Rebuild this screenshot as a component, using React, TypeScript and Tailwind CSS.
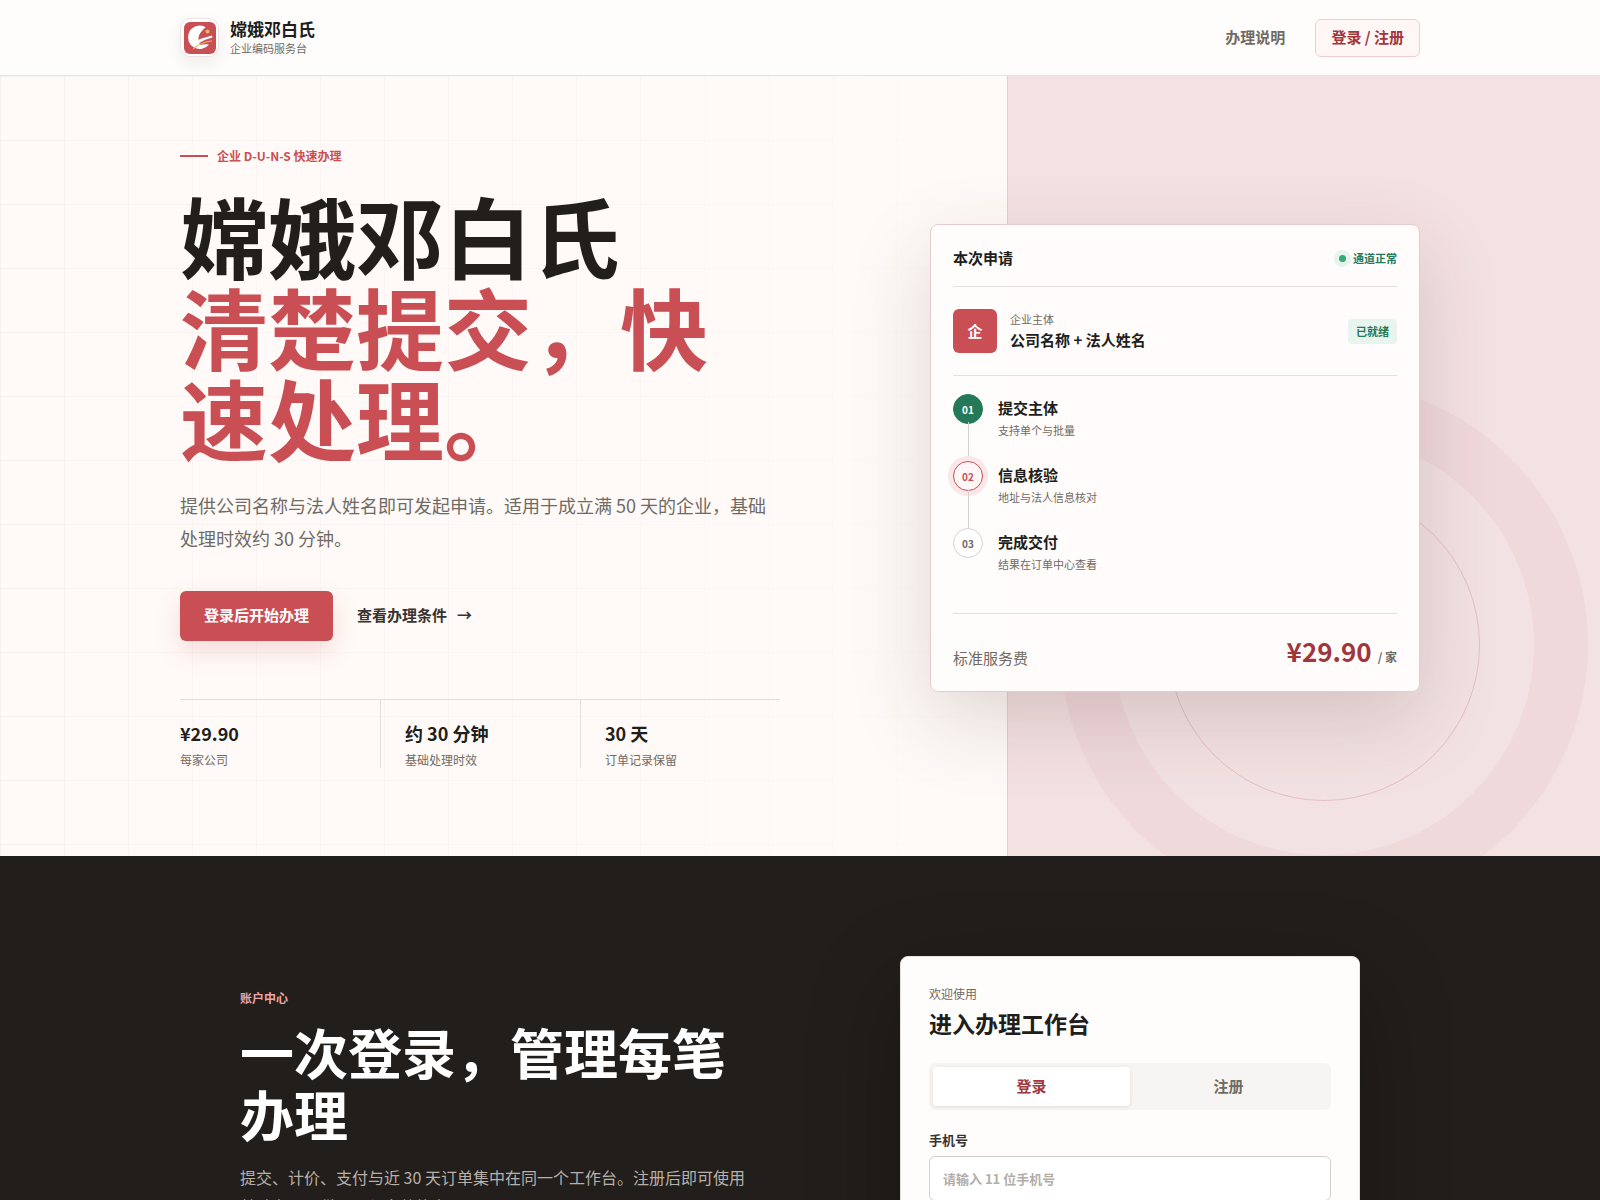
import React, { useState } from 'react';

const stats = [
  { value: '¥29.90', label: '每家公司' },
  { value: '约 30 分钟', label: '基础处理时效' },
  { value: '30 天', label: '订单记录保留' },
];

const steps = [
  { no: '01', title: '提交主体', desc: '支持单个与批量', dot: 'bg-[#247a58] border-[#247a58] text-white' },
  { no: '02', title: '信息核验', desc: '地址与法人信息核对', dot: 'bg-[#fff7f7] border-[#c94f55] text-[#c94f55] ring-5 ring-[#fae7e8]' },
  { no: '03', title: '完成交付', desc: '结果在订单中心查看', dot: 'bg-white border-[#d6d1cd] text-[#706a64]' },
];

const Logo = () => (
  <span className="flex size-[39px] items-center justify-center rounded-[10px] border border-[#efe3e2] bg-white shadow-[0_6px_16px_rgba(33,30,27,0.07)]">
    <svg viewBox="0 0 64 64" className="size-8 shrink-0" aria-hidden="true">
      <rect width="64" height="64" rx="12" fill="#c94f55" />
      <path d="M36 7.500A23.500 23.500 0 1 0 50 45C44 44 38 44 33 46C27 38 28 27 34 20C37 16 40 13 43 11C41 9 39 8 36 7.500Z" fill="#fff" />
      <path d="M28 36C38 31 47 30 56 27L57 31C48 34 40 35 31 42Z" fill="#fff" />
      <path d="M19 53C30 44 41 40 55 38" fill="none" stroke="#eab765" strokeWidth="2.500" strokeLinecap="round" />
      <circle cx="47" cy="19" r="4" fill="#eab765" />
    </svg>
  </span>
);

const Header = () => (
  <header className="border-b border-[#e7e3e0] bg-[#fffdfc]">
    <div className="mx-auto flex h-[75px] max-w-[1240px] items-center justify-between">
      <a href="#top" className="flex items-center gap-[11px]">
        <Logo />
        <span className="flex flex-col">
          <strong className="text-[17px] leading-5 font-bold">嫦娥邓白氏</strong>
          <small className="text-[11px] leading-[18px] text-[#706a64]">企业编码服务台</small>
        </span>
      </a>
      <nav className="flex items-center gap-[30px] text-[15px] font-bold">
        <a href="#guide" className="text-[#706a64]">办理说明</a>
        <a href="#login" className="flex h-[38px] items-center rounded-md border border-[#efcdd0] bg-[#fff6f6] px-[15px] text-[#a1363d]">
          登录 / 注册
        </a>
      </nav>
    </div>
  </header>
);

const ApplicationCard = () => (
  <aside className="w-[490px] rounded-lg border border-[#e3cccd] bg-[#fffdfc]/96 px-[22px] shadow-[0_28px_80px_rgba(71,43,42,0.17)]">
    <div className="flex h-[62px] items-center justify-between border-b border-[#e5e0dd] pt-[6px]">
      <h2 className="text-[15px] font-bold">本次申请</h2>
      <span className="flex items-center gap-[7px] text-[11px] font-bold text-[#247a58]">
        <i className="size-[7px] rounded-full bg-[#35a878] ring-5 ring-[#e7f4ee]" />
        通道正常
      </span>
    </div>

    <div className="flex h-[89px] items-center border-b border-[#e5e0dd]">
      <span className="flex size-11 items-center justify-center rounded-md bg-[#c94f55] text-[15px] font-bold text-white">企</span>
      <div className="ml-[13px] flex flex-col pb-0.5">
        <small className="text-[11px] leading-5 text-[#706a64]">企业主体</small>
        <strong className="text-[15px] leading-[22px] font-bold">公司名称 + 法人姓名</strong>
      </div>
      <em className="ml-auto rounded-sm bg-[#e8f4ee] px-2 py-1 text-[11px] leading-[17px] font-bold text-[#247a58] not-italic">已就绪</em>
    </div>

    <ol className="pt-[18px] pb-[18px]">
      {steps.map((step, i) => (
        <li key={step.no} className="relative flex h-[67px] gap-[15px]">
          <span className={`flex size-[30px] shrink-0 items-center justify-center rounded-full border text-[10px] font-bold ${step.dot}`}>
            {step.no}
          </span>
          {i < steps.length - 1 && <i className="absolute top-7 left-[15px] h-[39px] w-px bg-[#d6d1cd]" />}
          <div className="flex flex-col pt-[3px]">
            <strong className="text-[15px] leading-[22px] font-bold">{step.title}</strong>
            <small className="text-[11px] leading-[22px] text-[#706a64]">{step.desc}</small>
          </div>
        </li>
      ))}
    </ol>

    <div className="flex h-[78px] items-center justify-between border-t border-[#e5e0dd]">
      <span className="pt-3 text-[15px] text-[#706a64]">标准服务费</span>
      <strong className="pb-1 text-[26px] leading-9 font-bold text-[#a1363d]">
        ¥29.90 <small className="text-xs text-[#706a64]">/ 家</small>
      </strong>
    </div>
  </aside>
);

const Hero = () => (
  <section id="top" className="relative isolate overflow-hidden bg-[#fffaf7]">
    <div className="absolute inset-0 -z-10 bg-[linear-gradient(rgba(33,30,27,0.035)_1px,transparent_1px),linear-gradient(90deg,rgba(33,30,27,0.035)_1px,transparent_1px)] [mask-image:linear-gradient(90deg,black,transparent_72%)] bg-size-[64px_64px]" />
    <div className="absolute inset-y-0 right-0 -z-10 box-content w-[37%] border-l border-[#e8ccce] bg-[#f4e1e1]">
      <div className="absolute right-3 -bottom-[53px] size-[528px] rounded-full border-[54px] border-[#f0d9db] bg-[#f3e2e3]">
        <div className="absolute inset-[54px] rounded-full border border-[#e5bfc3]" />
      </div>
    </div>

    <div className="mx-auto flex max-w-[1240px] items-center justify-between pt-[72px] pb-[88px]">
      <div className="w-[600px]">
        <p className="flex items-center gap-[9px] text-xs leading-4 font-bold text-[#c94f55]">
          <i className="h-0.5 w-7 bg-[#c94f55]" />
          企业 D-U-N-S 快速办理
        </p>
        <h1 className="mt-6 text-[88px] leading-[91px] font-bold">
          嫦娥邓白氏
          <span className="block text-[#c94f55]">清楚提交，快速处理。</span>
        </h1>
        <p className="mt-7 text-lg leading-[33px] text-[#706a64]">
          提供公司名称与法人姓名即可发起申请。适用于成立满 50 天的企业，基础处理时效约 30 分钟。
        </p>
        <div className="mt-9 flex items-center gap-6 text-[15px] font-bold">
          <a href="#login" className="flex h-[50px] items-center rounded-md bg-[#c94f55] px-6 pb-0.5 text-white shadow-[0_10px_24px_rgba(201,79,85,0.18)]">
            登录后开始办理
          </a>
          <a href="#guide" className="flex items-center gap-[10px] pb-0.5 text-[#38332f]">
            查看办理条件 <span>→</span>
          </a>
        </div>
        <dl className="mt-[58px] grid grid-cols-3 border-t border-[#e2dedb]">
          {stats.map((item) => (
            <div key={item.label} className="flex h-[68px] flex-col border-l border-[#e2dedb] pt-5 pl-6 first:border-l-0 first:pl-0">
              <dt className="order-2 text-xs leading-7 text-[#706a64]">{item.label}</dt>
              <dd className="text-lg leading-[26px] font-bold">{item.value}</dd>
            </div>
          ))}
        </dl>
      </div>
      <ApplicationCard />
    </div>
  </section>
);

const LoginCard = () => {
  const [tab, setTab] = useState('登录');

  return (
    <form className="w-[460px] rounded-lg border border-[#e7e3e0] bg-[#fffdfc] p-7 shadow-[0_30px_90px_rgba(0,0,0,0.28)]">
      <p className="text-xs leading-[18px] text-[#706a64]">欢迎使用</p>
      <h3 className="text-[23px] leading-10 font-bold">进入办理工作台</h3>
      <div className="mt-5 grid grid-cols-2 rounded-md bg-[#f6f5f4] p-1">
        {['登录', '注册'].map((name) => (
          <button
            key={name}
            type="button"
            onClick={() => setTab(name)}
            className={`h-[39px] rounded text-[15px] font-bold ${tab === name ? 'bg-white text-[#a1363d] shadow-[0_1px_4px_rgba(33,30,27,0.1)]' : 'text-[#706a64]'}`}
          >
            {name}
          </button>
        ))}
      </div>
      <label htmlFor="phone" className="mt-5 block text-[13px] leading-5 font-bold text-[#38332f]">手机号</label>
      <input
        id="phone"
        type="tel"
        placeholder="请输入 11 位手机号"
        className="mt-[6px] block h-[45px] w-full rounded-md border border-[#d6cfcb] bg-white px-[13px] text-[13px] font-bold placeholder:text-[#b3ada8]"
      />
      <label htmlFor="password" className="mt-4 block text-[13px] leading-5 font-bold text-[#38332f]">密码</label>
      <input
        id="password"
        type="password"
        placeholder="请输入密码"
        className="mt-[6px] block h-[45px] w-full rounded-md border border-[#d6cfcb] bg-white px-[13px] text-[13px] font-bold placeholder:text-[#b3ada8]"
      />
      <button type="submit" className="mt-6 h-[50px] w-full rounded-md bg-[#c94f55] text-[15px] font-bold text-white">登录</button>
    </form>
  );
};

const Account = () => (
  <section id="login" className="bg-[#211e1b] py-[100px]">
    <div className="mx-auto flex max-w-[1120px] items-start justify-between">
      <div className="w-[520px] pt-8">
        <p className="text-xs leading-5 font-bold text-[#eba6a9]">账户中心</p>
        <h2 className="mt-[13px] text-[54px] leading-[62px] font-bold text-white">一次登录，管理每笔办理</h2>
        <p className="mt-[18px] text-base leading-[29px] text-[#b8b0a9]">
          提交、计价、支付与近 30 天订单集中在同一个工作台。注册后即可使用基础办理，供 API 与完整能力。
        </p>
      </div>
      <LoginCard />
    </div>
  </section>
);

export default function App() {
  return (
    <div className="h-screen overflow-x-hidden overflow-y-auto bg-[#211e1b] font-['Noto_Sans_CJK_SC',sans-serif] text-[#211e1b] [scrollbar-width:none]">
      <Header />
      <Hero />
      <Account />
    </div>
  );
}
